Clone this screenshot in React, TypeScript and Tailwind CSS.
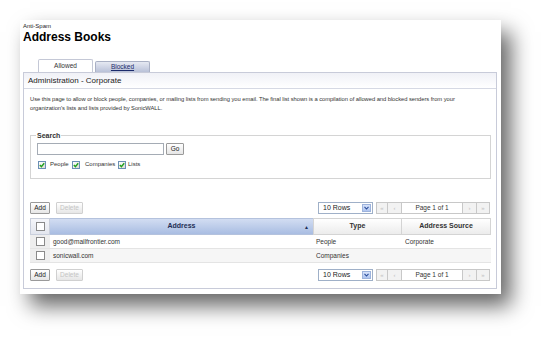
import React from 'react';

const font = { fontFamily: '"Liberation Sans", Arial, sans-serif' };

const GreenCheck: React.FC = () => (
  <span className="w-[8px] h-[8px] border border-[#6b8fb5] bg-gradient-to-br from-[#ffffff] to-[#dcdcd4] flex items-center justify-center shrink-0">
    <svg width="6" height="6" viewBox="0 0 6 6">
      <path d="M0.8 3 L2.4 4.6 L5.2 1.2" fill="none" stroke="#22a020" strokeWidth="1.4" />
    </svg>
  </span>
);

const EmptyBox: React.FC = () => (
  <span className="w-[9px] h-[9px] border border-[#8a8a8a] bg-white block" />
);

const SmallButton: React.FC<{ label: string; disabled?: boolean; w: string }> = ({ label, disabled, w }) => (
  <div
    className={`${w} h-[12px] border flex items-center justify-center text-[6.5px] rounded-[1px] bg-gradient-to-b from-[#ffffff] to-[#e6e6e6] ${
      disabled ? 'border-[#d0d0d0] text-[#c4c4c4]' : 'border-[#9a9a9a] text-[#222]'
    }`}
  >
    {label}
  </div>
);

const Pager: React.FC = () => (
  <div className="flex items-center">
    <div className="w-[55px] h-[12px] border border-[#9fb0c8] bg-white flex items-center pl-[4px] text-[7px] text-[#222] relative">
      10 Rows
      <span className="absolute right-[1px] top-[1px] w-[9px] h-[8px] bg-gradient-to-b from-[#d7e3fb] to-[#aec4ef] border border-[#9db3dc] flex items-center justify-center">
        <svg width="5" height="4" viewBox="0 0 5 4">
          <path d="M0.5 0.8 L2.5 3 L4.5 0.8" fill="none" stroke="#2a4d9a" strokeWidth="1.1" />
        </svg>
      </span>
    </div>
    <div className="ml-[3px] flex">
      <div className="w-[12px] h-[12px] border border-[#c8c8c8] bg-[#f2f2f2] text-[6px] text-[#c0c0c0] flex items-center justify-center">«</div>
      <div className="w-[14px] h-[12px] border border-l-0 border-[#c8c8c8] bg-[#f2f2f2] text-[6px] text-[#c0c0c0] flex items-center justify-center">‹</div>
      <div className="w-[61px] h-[12px] border border-l-0 border-[#c8c8c8] bg-white text-[6.5px] text-[#333] flex items-center justify-center">Page 1 of 1</div>
      <div className="w-[14px] h-[12px] border border-l-0 border-[#c8c8c8] bg-[#f2f2f2] text-[6px] text-[#c0c0c0] flex items-center justify-center">›</div>
      <div className="w-[13px] h-[12px] border border-l-0 border-[#c8c8c8] bg-[#f2f2f2] text-[6px] text-[#c0c0c0] flex items-center justify-center">»</div>
    </div>
  </div>
);

const ActionRow: React.FC = () => (
  <div className="flex items-center justify-between w-[461px]">
    <div className="flex gap-[6px]">
      <SmallButton label="Add" w="w-[20px]" />
      <SmallButton label="Delete" disabled w="w-[27px]" />
    </div>
    <div className="mr-[1px]">
      <Pager />
    </div>
  </div>
);

const rows = [
  { address: 'good@mailfrontier.com', type: 'People', source: 'Corporate' },
  { address: 'sonicwall.com', type: 'Companies', source: '' },
];

export default function App() {
  return (
    <div className="w-[543px] h-[337px] bg-white overflow-hidden" style={font}>
      <div className="ml-[20px] mt-[20px] w-[481px] h-[274px] bg-white shadow-[10px_12px_20px_rgba(0,0,0,0.6)] flex flex-col pl-[3px] pr-[4px]">
        <div className="mt-[2px] text-[6px] leading-[8px] text-[#222]">Anti-Spam</div>
        <div className="text-[12px] leading-[15px] font-bold text-black">Address Books</div>

        <div className="mt-[14px] ml-[15px] flex items-end h-[13px]">
          <div className="w-[55px] h-[13px] border border-b-0 border-[#c4c8d6] rounded-t-[2px] bg-white flex items-center justify-center text-[6.5px] text-[#333]">
            Allowed
          </div>
          <div className="ml-[2px] w-[55px] h-[11px] border border-b-0 border-[#a9b0c4] rounded-t-[2px] bg-gradient-to-b from-[#e6e9f2] to-[#b9c1d8] flex items-center justify-center text-[6.5px] text-[#1b2a6b] underline">
            Blocked
          </div>
        </div>

        <div className="w-[474px] h-[217px] border border-[#c8cbd9] flex flex-col">
          <div className="h-[16px] border-b border-[#d6d9e4] bg-gradient-to-b from-[#f0f1f7] to-[#ffffff] flex items-center pl-[4px] text-[8px] text-[#222]">
            Administration - Corporate
          </div>

          <div className="pl-[6px] pt-[6px] pr-[10px] text-[5.8px] leading-[9px] text-[#333] tracking-[-0.05px]">
            Use this page to allow or block people, companies, or mailing lists from sending you email. The final list shown is a compilation of allowed and blocked senders from your organization's lists and lists provided by SonicWALL.
          </div>

          <fieldset className="ml-[6px] mt-[19px] w-[461px] h-[47px] border border-[#d4d4d4] px-[6px] pt-[2px]">
            <legend className="px-[1px] ml-[-1px] text-[7px] font-bold text-[#333] leading-[7px]">Search</legend>
            <div className="flex items-center gap-[2px] mt-[2px]">
              <div className="w-[127px] h-[12px] border border-[#a5acb5] bg-white" />
              <SmallButton label="Go" w="w-[18px]" />
            </div>
            <div className="flex items-center mt-[5px] ml-[1px] text-[6px] text-[#333]">
              <GreenCheck />
              <span className="ml-[4px] w-[22px] shrink-0">People</span>
              <GreenCheck />
              <span className="ml-[5px] w-[33px] shrink-0">Companies</span>
              <GreenCheck />
              <span className="ml-[2px]">Lists</span>
            </div>
          </fieldset>

          <div className="ml-[6px] mt-[23px]">
            <ActionRow />
          </div>

          <div className="ml-[6px] mt-[4px] w-[461px] text-[6.5px] text-[#333]">
            <div className="flex h-[17px]">
              <div className="w-[20px] border border-[#c9cfdc] bg-gradient-to-b from-[#f5f6fa] to-[#e3e6ee] flex items-center justify-center">
                <EmptyBox />
              </div>
              <div className="w-[263px] border-y border-[#b4c2dd] bg-gradient-to-b from-[#d2ddf2] to-[#a9bde2] flex items-center justify-center relative font-bold text-[#1e2e55] text-[7px]">
                Address
                <span className="absolute right-[4px] top-[5px] text-[5px] text-[#1e2e55]">▲</span>
              </div>
              <div className="w-[89px] border border-[#d4d4d4] bg-gradient-to-b from-[#ffffff] to-[#ececec] flex items-center justify-center font-bold text-[7px] text-[#333]">
                Type
              </div>
              <div className="w-[89px] border border-l-0 border-[#d4d4d4] bg-gradient-to-b from-[#ffffff] to-[#ececec] flex items-center justify-center font-bold text-[7px] text-[#333]">
                Address Source
              </div>
            </div>
            {rows.map((r, i) => (
              <div key={r.address} className={`flex h-[14px] border-b border-[#e4e4e4] ${i % 2 ? 'bg-[#f6f6f6]' : 'bg-white'}`}>
                <div className="w-[20px] bg-[#eeeeee] flex items-center justify-center">
                  <EmptyBox />
                </div>
                <div className="w-[263px] pl-[3px] flex items-center">{r.address}</div>
                <div className="w-[89px] pl-[3px] flex items-center">{r.type}</div>
                <div className="w-[89px] pl-[3px] flex items-center">{r.source}</div>
              </div>
            ))}
          </div>

          <div className="ml-[6px] mt-[6px]">
            <ActionRow />
          </div>
        </div>
      </div>
    </div>
  );
}
